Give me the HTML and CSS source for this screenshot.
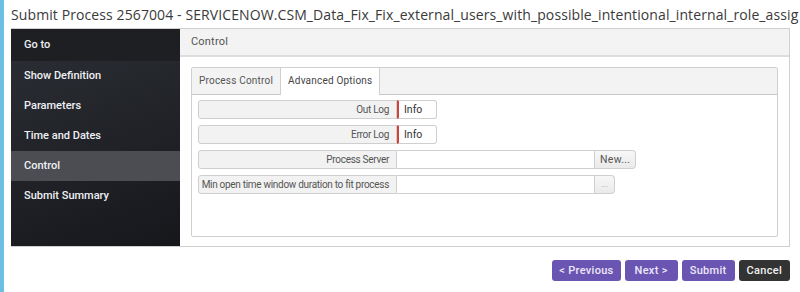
FILE: index.html
```html
<!DOCTYPE html>
<html lang="en">
<head>
  <meta charset="UTF-8">
  <title>Submit Process</title>
  <link rel="stylesheet" href="styles.css">
</head>
<body>
  <div class="dialog">
    <div class="dialog-title">Submit Process 2567004 - SERVICENOW.CSM_Data_Fix_Fix_external_users_with_possible_intentional_internal_role_assig</div>

    <div class="panel">
      <!-- Wizard steps -->
      <div class="sidebar">
        <div class="nav-item goto">Go to</div>
        <div class="nav-item">Show Definition</div>
        <div class="nav-item">Parameters</div>
        <div class="nav-item">Time and Dates</div>
        <div class="nav-item active">Control</div>
        <div class="nav-item">Submit Summary</div>
      </div>

      <div class="content">
        <div class="content-header">Control</div>
        <div class="content-body">
          <div class="tabs">
            <div class="tab-bar">
              <div class="tab">Process Control</div>
              <div class="tab selected">Advanced Options</div>
            </div>
            <div class="tab-body">
              <div class="field">
                <div class="field-label">Out Log</div>
                <div class="field-value short flagged">Info</div>
              </div>
              <div class="field">
                <div class="field-label">Error Log</div>
                <div class="field-value short flagged">Info</div>
              </div>
              <div class="field">
                <div class="field-label">Process Server</div>
                <div class="field-value long"></div>
                <div class="field-btn">New...</div>
              </div>
              <div class="field">
                <div class="field-label">Min open time window duration to fit process</div>
                <div class="field-value long"></div>
                <div class="field-btn dots">...</div>
              </div>
            </div>
          </div>
        </div>
      </div>
    </div>

    <div class="actions">
      <button class="btn prev">&lt; Previous</button>
      <button class="btn next">Next &gt;</button>
      <button class="btn">Submit</button>
      <button class="btn cancel">Cancel</button>
    </div>
  </div>
</body>
</html>
```

FILE: styles.css
```css
/* General Styling */
body {
  margin: 0;
  background: #ffffff;
  font-family: Roboto, "Liberation Sans", sans-serif;
  overflow: hidden;
}

.dialog {
  height: 292px;
  border-left: 4px solid #6cbfe3; /* blue strip from the page behind */
  box-sizing: border-box;
}

.dialog-title {
  height: 28px;
  line-height: 30px;
  padding-left: 7px;
  font-family: "Open Sans", "Liberation Sans", sans-serif;
  font-size: 14px;
  letter-spacing: 0.1px;
  color: #3a3a3a;
  white-space: nowrap;
  overflow: hidden;
}

.panel {
  display: flex;
  height: 219px;
  margin: 0 10px 0 7px;
  border: 1px solid #d0d0d0;
  border-left: none;
  box-sizing: border-box;
}

/* Sidebar */
.sidebar {
  width: 169px;
  flex-shrink: 0;
  background: linear-gradient(160deg, #2c2f35 0%, #1f2126 60%, #16171b 100%);
}

.nav-item {
  height: 30px;
  line-height: 30px;
  padding-left: 13px;
  font-size: 11px;
  font-weight: 500;
  color: #eef0f4;
}

.nav-item.goto {
  height: 32px;
  line-height: 32px;
  background: #1d1f23;
}

.nav-item.active {
  background: #4b4d52;
}

/* Content */
.content {
  flex: 1;
  display: flex;
  flex-direction: column;
}

.content-header {
  height: 26px;
  line-height: 26px;
  padding-left: 11px;
  background: #f3f3f3;
  border-bottom: 2px solid #dedede;
  font-size: 11px;
  letter-spacing: 0.2px;
  color: #555;
}

.content-body {
  flex: 1;
  padding: 10px 11px 9px 11px;
  display: flex;
}

.tabs {
  flex: 1;
  border: 1px solid #cfcfcf;
  border-radius: 2px;
  display: flex;
  flex-direction: column;
}

.tab-bar {
  display: flex;
  height: 26px;
  background: #f3f3f3;
  border-bottom: 1px solid #c8c8c8;
}

.tab {
  padding: 0 7px;
  line-height: 26px;
  font-size: 10px;
  letter-spacing: 0.2px;
  color: #555;
}

.tab.selected {
  background: #ffffff;
  color: #444;
  border-left: 1px solid #cfcfcf;
  border-right: 1px solid #cfcfcf;
  height: 27px;
}

.tab-body {
  padding: 5px 6px;
  display: flex;
  flex-direction: column;
  gap: 6px;
}

/* Fields */
.field {
  display: flex;
  height: 19px;
}

.field-label {
  width: 199px;
  flex-shrink: 0;
  box-sizing: border-box;
  background: #f2f2f2;
  border: 1px solid #cfcfcf;
  border-radius: 3px 0 0 3px;
  text-align: right;
  padding-right: 7px;
  line-height: 17px;
  font-size: 10px;
  letter-spacing: -0.3px;
  color: #555;
  white-space: nowrap;
}

.field-value {
  box-sizing: border-box;
  border: 1px solid #cfcfcf;
  border-left: none;
  padding-left: 5px;
  line-height: 17px;
  font-size: 10.5px;
  color: #333;
}

.field-value.short {
  width: 40px;
  border-radius: 0 3px 3px 0;
}

.field-value.flagged {
  border-left: 2px solid #d2413b;
}

.field-value.long {
  width: 198px;
}

.field-btn {
  box-sizing: border-box;
  border: 1px solid #cfcfcf;
  border-left: none;
  border-radius: 0 4px 4px 0;
  background: linear-gradient(#f7f7f7, #eaeaea);
  padding: 0 5px;
  line-height: 17px;
  font-size: 10.5px;
  letter-spacing: 0.3px;
  color: #555;
}

.field-btn.dots {
  width: 20px;
  padding: 0;
  text-align: center;
  font-size: 8px;
  color: #999;
}

/* Footer buttons */
.actions {
  display: flex;
  justify-content: flex-end;
  gap: 4px;
  margin: 13px 10px 0 0;
}

.btn {
  height: 21px;
  padding: 0 8px;
  border: none;
  border-radius: 3px;
  background: #6a55b2;
  color: #ece8f8;
  font-family: Roboto, "Liberation Sans", sans-serif;
  font-size: 11px;
  font-weight: 500;
  letter-spacing: 0.3px;
}

.btn.prev {
  padding: 0 7px;
}

.btn.next {
  padding: 0 10px;
}

.btn.cancel {
  background: #333333;
  color: #f2f2f2;
}
```
